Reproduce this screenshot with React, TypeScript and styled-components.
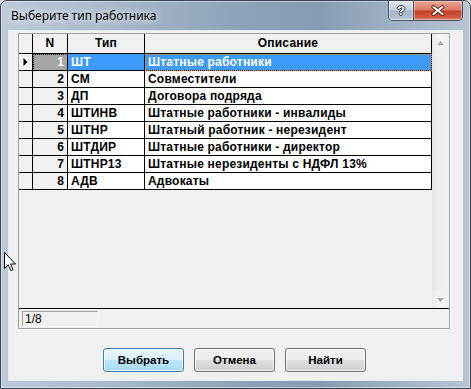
import React from 'react';
import styled, { createGlobalStyle, css } from 'styled-components';

const Global = createGlobalStyle`
  html, body { margin: 0; padding: 0; background: #d9dde2; }
  body { width: 471px; height: 389px; overflow: hidden; }
  * { box-sizing: border-box; }
`;

const Window = styled.div`
  position: relative;
  width: 471px;
  height: 389px;
  border: 1px solid #3e4550;
  border-radius: 7px 7px 0 0;
  background: linear-gradient(90deg, #bccada 0%, #a9bacc 22%, #8ea3ba 50%, #869bb3 68%, #a3b4c7 86%, #b7c5d4 100%);
  box-shadow: inset 0 0 0 1px rgba(255, 255, 255, 0.45);
  display: flex;
  flex-direction: column;
`;

const TitleBar = styled.div`
  height: 29px;
  display: flex;
  align-items: flex-start;
`;

const Title = styled.div`
  padding-left: 10px;
  line-height: 29px;
  font-family: "Noto Sans", sans-serif;
  font-size: 12px;
  color: #000;
  text-shadow: 0 0 6px rgba(255, 255, 255, 0.9), 0 0 10px rgba(255, 255, 255, 0.7);
`;

const CaptionGroup = styled.div`
  margin-left: auto;
  margin-right: 7px;
  display: flex;
  height: 20px;
  border: 1px solid #4a5566;
  border-top: none;
  border-radius: 0 0 5px 5px;
  overflow: hidden;
`;

const CaptionButton = styled.div<{ $close?: boolean }>`
  width: ${(p) => (p.$close ? 48 : 25)}px;
  height: 100%;
  display: flex;
  align-items: center;
  justify-content: center;
  box-shadow: inset 0 0 0 1px rgba(255, 255, 255, 0.35);
  ${(p) =>
    p.$close
      ? css`
          background: linear-gradient(180deg, #e9a898 0%, #dc7a64 45%, #c6412a 55%, #cf5a41 85%, #e08a6f 100%);
        `
      : css`
          border-right: 1px solid #4a5566;
          background: linear-gradient(180deg, #e2e8ef 0%, #c6d1dd 45%, #a6b6c8 55%, #aebdcd 85%, #c4d0dc 100%);
        `}
`;

const HelpGlyph = styled.span`
  font-family: "Liberation Sans", sans-serif;
  font-weight: bold;
  font-size: 13px;
  color: #fff;
  text-shadow: 0 0 1px #2a3340, 1px 0 0 #3a4350, -1px 0 0 #3a4350, 0 1px 0 #3a4350, 0 -1px 0 #3a4350;
`;

const Client = styled.div`
  flex: 1;
  margin: 0 7px 7px 7px;
  border: 1px solid #e6ecf2;
  background: #f0f0f0;
  padding: 2px 11px 0 9px;
  display: flex;
  flex-direction: column;
`;

const Panel = styled.div`
  width: 432px;
  height: 296px;
  border: 1px solid #a0a0a0;
  box-shadow: 1px 1px 0 #ffffff;
  display: flex;
  flex-direction: column;
  background: #f0f0f0;
`;

const GridArea = styled.div`
  height: 275px;
  border-bottom: 1px solid #000;
  display: flex;
`;

const Table = styled.div`
  width: 413px;
  display: grid;
  grid-template-columns: 14px 35px 77px 287px;
  grid-auto-rows: 17px;
  grid-template-rows: 20px;
  align-content: start;
  font-family: "Liberation Sans", Arial, sans-serif;
  font-weight: bold;
  font-size: 12px;
  letter-spacing: 0.2px;
  color: #000;
`;

const HeadCell = styled.div`
  background: #f0f0f0;
  border-right: 1px solid #000;
  border-bottom: 1px solid #000;
  line-height: 19px;
  text-align: center;
  white-space: nowrap;
`;

type Kind = 'ind' | 'num' | 'text';

const Cell = styled.div<{ $kind: Kind; $sel?: boolean; $focus?: boolean }>`
  position: relative;
  border-right: 1px solid #000;
  border-bottom: 1px solid #000;
  line-height: 16px;
  white-space: nowrap;
  overflow: hidden;
  background: ${(p) => (p.$kind === 'text' ? '#fff' : '#f0f0f0')};
  text-align: ${(p) => (p.$kind === 'num' ? 'right' : 'left')};
  padding: ${(p) => (p.$kind === 'num' ? '0 3px 0 0' : p.$kind === 'text' ? '0 0 0 3px' : '0')};
  display: ${(p) => (p.$kind === 'ind' ? 'flex' : 'block')};
  align-items: center;
  justify-content: center;
  ${(p) =>
    p.$sel &&
    p.$kind === 'num' &&
    css`
      background: #a6a6a6;
      color: #fff;
      outline: 1px dotted #000;
      outline-offset: -1px;
    `}
  ${(p) =>
    p.$sel &&
    p.$kind === 'text' &&
    css`
      background: #3d9bfc;
      color: #fff;
    `}
  ${(p) =>
    p.$focus &&
    css`
      outline: 1px dotted #ff8a00;
      outline-offset: -1px;
    `}
`;

const ScrollBar = styled.div`
  width: 17px;
  display: flex;
  flex-direction: column;
  justify-content: space-between;
  background: linear-gradient(90deg, #e4e4e4 0%, #efefef 35%, #f2f2f2 100%);
`;

const ScrollButton = styled.div`
  height: 17px;
  display: flex;
  align-items: center;
  justify-content: center;
  background: linear-gradient(90deg, #e9e9e9 0%, #f3f3f3 40%, #f0f0f0 100%);
`;

const StatusBar = styled.div`
  flex: 1;
  padding: 2px 0 0 3px;
`;

const StatusBox = styled.div`
  width: 76px;
  height: 16px;
  border-top: 1px solid #a0a0a0;
  border-left: 1px solid #a0a0a0;
  border-bottom: 1px solid #ffffff;
  border-right: 1px solid #ffffff;
  padding-left: 2px;
  font-family: "Liberation Sans", Arial, sans-serif;
  font-size: 12px;
  line-height: 14px;
  color: #000;
`;

const ButtonRow = styled.div`
  margin-top: 19px;
  display: flex;
  justify-content: center;
  gap: 10px;
`;

const Button = styled.div<{ $default?: boolean }>`
  width: 81px;
  height: 24px;
  border-radius: 3px;
  display: flex;
  align-items: center;
  justify-content: center;
  font-family: "Liberation Sans", Arial, sans-serif;
  font-weight: bold;
  font-size: 11.5px;
  color: #000;
  box-shadow: inset 0 0 0 1px rgba(255, 255, 255, 0.75);
  ${(p) =>
    p.$default
      ? css`
          border: 1px solid #3c7fb1;
          background: linear-gradient(180deg, #eaf6fd 0%, #d9f0fc 48%, #bee6fd 52%, #a7d9f5 100%);
        `
      : css`
          border: 1px solid #707070;
          background: linear-gradient(180deg, #f2f2f2 0%, #ebebeb 48%, #dddddd 52%, #cfcfcf 100%);
        `}
`;

const Cursor = styled.svg`
  position: absolute;
  left: 3px;
  top: 251px;
`;

const rows: [number, string, string][] = [
  [1, 'ШТ', 'Штатные работники'],
  [2, 'СМ', 'Совместители'],
  [3, 'ДП', 'Договора подряда'],
  [4, 'ШТИНВ', 'Штатные работники - инвалиды'],
  [5, 'ШТНР', 'Штатный работник - нерезидент'],
  [6, 'ШТДИР', 'Штатные работники - директор'],
  [7, 'ШТНР13', 'Штатные нерезиденты с НДФЛ 13%'],
  [8, 'АДВ', 'Адвокаты'],
];

export default function App() {
  return (
    <>
      <Global />
      <Window>
        <TitleBar>
          <Title>Выберите тип работника</Title>
          <CaptionGroup>
            <CaptionButton>
              <HelpGlyph>?</HelpGlyph>
            </CaptionButton>
            <CaptionButton $close>
              <svg width="14" height="11" viewBox="0 0 14 11">
                <path d="M2.5 2 L11.5 9 M11.5 2 L2.5 9" stroke="#5a2218" strokeWidth="4" strokeLinecap="round" />
                <path d="M2.5 2 L11.5 9 M11.5 2 L2.5 9" stroke="#ffffff" strokeWidth="2.2" strokeLinecap="round" />
              </svg>
            </CaptionButton>
          </CaptionGroup>
        </TitleBar>
        <Client>
          <Panel>
            <GridArea>
              <Table>
                <HeadCell />
                <HeadCell>N</HeadCell>
                <HeadCell>Тип</HeadCell>
                <HeadCell>Описание</HeadCell>
                {rows.map(([n, code, desc], i) => {
                  const sel = i === 0;
                  return (
                    <React.Fragment key={n}>
                      <Cell $kind="ind">
                        {sel && (
                          <svg width="5" height="8" viewBox="0 0 5 8">
                            <path d="M0.5 0 L4.5 4 L0.5 8 Z" fill="#000" />
                          </svg>
                        )}
                      </Cell>
                      <Cell $kind="num" $sel={sel}>{n}</Cell>
                      <Cell $kind="text" $sel={sel}>{code}</Cell>
                      <Cell $kind="text" $sel={sel} $focus={sel}>{desc}</Cell>
                    </React.Fragment>
                  );
                })}
              </Table>
              <ScrollBar>
                <ScrollButton>
                  <svg width="7" height="4" viewBox="0 0 7 4">
                    <path d="M3.5 0 L7 4 L0 4 Z" fill="#a8a8a8" />
                  </svg>
                </ScrollButton>
                <ScrollButton>
                  <svg width="7" height="4" viewBox="0 0 7 4">
                    <path d="M0 0 L7 0 L3.5 4 Z" fill="#a8a8a8" />
                  </svg>
                </ScrollButton>
              </ScrollBar>
            </GridArea>
            <StatusBar>
              <StatusBox>1/8</StatusBox>
            </StatusBar>
          </Panel>
          <ButtonRow>
            <Button $default>Выбрать</Button>
            <Button>Отмена</Button>
            <Button>Найти</Button>
          </ButtonRow>
        </Client>
        <Cursor width="13" height="20" viewBox="0 0 13 20">
          <path d="M0.5 0.5 L0.5 16.5 L4.3 12.8 L6.8 18.6 L9 17.6 L6.6 12 L11.5 12 Z" fill="#fff" stroke="#000" strokeWidth="1" strokeLinejoin="miter" />
        </Cursor>
      </Window>
    </>
  );
}
